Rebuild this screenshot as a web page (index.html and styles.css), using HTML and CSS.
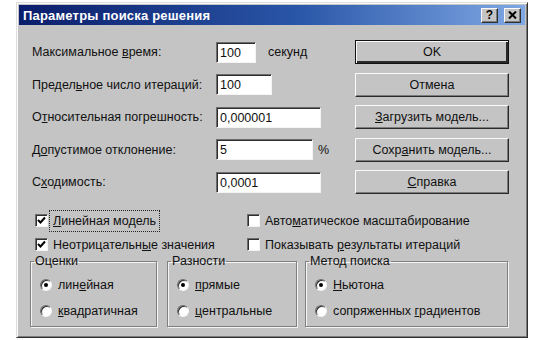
FILE: index.html
```html
<!DOCTYPE html>
<html lang="ru">
<head>
    <meta charset="UTF-8">
    <title>Параметры поиска решения</title>
    <link rel="stylesheet" href="styles.css">
</head>
<body>
    <div class="dialog">
        <div class="titlebar">
            <span class="title">Параметры поиска решения</span>
            <div class="title-btns">
                <span class="tbtn">?</span>
                <span class="tbtn">
                    <svg width="9" height="8" viewBox="0 0 9 8"><path d="M1 0.5 L8 7.5 M8 0.5 L1 7.5" stroke="#000" stroke-width="2"/></svg>
                </span>
            </div>
        </div>

        <div class="content">
            <div class="top">
                <div class="fields">
                    <label>Максимальное <u>в</u>ремя:</label>
                    <div class="cell"><input class="inp w40" value="100"><span class="unit">секунд</span></div>

                    <label>Предел<u>ь</u>ное число итераций:</label>
                    <div class="cell"><input class="inp w56" value="100"></div>

                    <label>О<u>т</u>носительная погрешность:</label>
                    <div class="cell"><input class="inp w105" value="0,000001"></div>

                    <label>Д<u>о</u>пустимое отклонение:</label>
                    <div class="cell"><input class="inp w97" value="5"><span class="pct">%</span></div>

                    <label>С<u>х</u>одимость:</label>
                    <div class="cell"><input class="inp w105" value="0,0001"></div>
                </div>

                <div class="buttons">
                    <button class="btn default">OK</button>
                    <button class="btn">Отмена</button>
                    <button class="btn"><u>З</u>агрузить модель...</button>
                    <button class="btn">Сохр<u>а</u>нить модель...</button>
                    <button class="btn"><u>С</u>правка</button>
                </div>
            </div>

            <div class="checks">
                <div class="check"><span class="box on"></span><span class="focus"><u>Л</u>инейная модель</span></div>
                <div class="check"><span class="box"></span><span>Авто<u>м</u>атическое масштабирование</span></div>
                <div class="check"><span class="box on"></span><span>Неотрицательн<u>ы</u>е значения</span></div>
                <div class="check"><span class="box"></span><span>Показывать <u>р</u>езультаты итераций</span></div>
            </div>

            <div class="groups">
                <fieldset class="group g1">
                    <legend>Оценки</legend>
                    <div class="radio"><span class="dot on"></span><span>лин<u>е</u>йная</span></div>
                    <div class="radio"><span class="dot"></span><span><u>к</u>вадратичная</span></div>
                </fieldset>
                <fieldset class="group g2">
                    <legend>Разности</legend>
                    <div class="radio"><span class="dot on"></span><span><u>п</u>рямые</span></div>
                    <div class="radio"><span class="dot"></span><span><u>ц</u>ентральные</span></div>
                </fieldset>
                <fieldset class="group g3">
                    <legend>Метод поиска</legend>
                    <div class="radio"><span class="dot on"></span><span><u>Н</u>ьютона</span></div>
                    <div class="radio"><span class="dot"></span><span>сопряженных <u>г</u>радиентов</span></div>
                </fieldset>
            </div>
        </div>
    </div>
</body>
</html>
```

FILE: styles.css
```css
body {
    margin: 0;
    background: #fff;
    font-family: "Liberation Sans", Arial, sans-serif;
    font-size: 12.5px;
    color: #111;
}
.dialog {
    margin: 2px 0 0 16px;
    width: 512px;
    height: 336px;
    box-sizing: border-box;
    background: #c4c4c4;
    border: 1px solid;
    border-color: #dedede #303030 #303030 #dedede;
    box-shadow: inset 1px 1px #fafafa, inset -1px -1px #7c7c7c;
    padding: 2px;
    display: flex;
    flex-direction: column;
}
.titlebar {
    height: 20px;
    background: linear-gradient(to right, #0a1d6a 0%, #2a56a8 55%, #7fa8e4 100%);
    display: flex;
    align-items: center;
    justify-content: space-between;
    padding: 0 4px 0 4px;
}
.title {
    color: #fff;
    font-weight: bold;
    font-size: 13px;
    letter-spacing: 0.2px;
}
.title-btns {
    display: flex;
    gap: 6px;
}
.tbtn {
    width: 15px;
    height: 13px;
    background: #c4c4c4;
    border: 1px solid;
    border-color: #fafafa #303030 #303030 #fafafa;
    box-shadow: inset -1px -1px #7c7c7c;
    display: flex;
    align-items: center;
    justify-content: center;
    font-weight: bold;
    font-size: 12px;
    line-height: 1;
    color: #000;
}
.content {
    padding: 11px 16px 0 13px;
}
.top {
    display: flex;
    justify-content: space-between;
}
.fields {
    display: grid;
    grid-template-columns: 184px auto;
    grid-auto-rows: 32.5px;
    align-items: center;
}
.cell {
    display: flex;
    align-items: center;
}
.inp {
    height: 21px;
    box-sizing: border-box;
    border: 1px solid;
    border-color: #6c6c6c #f4f4f4 #f4f4f4 #6c6c6c;
    box-shadow: inset 1px 1px #2e2e2e;
    background: #fff;
    font: inherit;
    color: #111;
    padding: 1px 0 0 3px;
    outline: none;
}
.w40 { width: 40px; }
.w56 { width: 56px; }
.w97 { width: 97px; }
.w105 { width: 105px; }
.unit {
    margin-left: 12px;
}
.pct {
    margin-left: 5px;
}
.buttons {
    display: grid;
    grid-auto-rows: 32.5px;
    align-items: center;
}
.btn {
    width: 154px;
    height: 24px;
    box-sizing: border-box;
    background: #c4c4c4;
    border: 1px solid;
    border-color: #fafafa #2a2a2a #2a2a2a #fafafa;
    box-shadow: inset -1px -1px #7c7c7c;
    font: inherit;
    color: #111;
    padding: 0;
}
.btn.default {
    border: 1px solid #111;
    box-shadow: inset 1px 1px #fafafa, inset -2px -2px #2a2a2a, inset -1px -1px #7c7c7c;
}
.checks {
    margin-top: 10px;
    display: grid;
    grid-template-columns: 212px auto;
    grid-auto-rows: 24px;
    align-items: center;
    padding-left: 3px;
}
.check {
    display: flex;
    align-items: center;
    gap: 5px;
}
.box {
    width: 13px;
    height: 13px;
    box-sizing: border-box;
    background: #fff;
    border: 1px solid;
    border-color: #6c6c6c #f4f4f4 #f4f4f4 #6c6c6c;
    box-shadow: inset 1px 1px #2e2e2e;
    flex: none;
}
.box.on {
    background: #fff url("data:image/svg+xml,%3Csvg xmlns='http://www.w3.org/2000/svg' width='11' height='11'%3E%3Cpath d='M2 5 L4.5 7.5 L9 2.5' fill='none' stroke='%23000' stroke-width='2'/%3E%3C/svg%3E") no-repeat 0 0;
}
.focus {
    outline: 1px dotted #222;
    outline-offset: 3px;
}
.groups {
    margin: -2px 0 0 -2px;
    display: flex;
}
.group {
    margin: 0;
    height: 72px;
    box-sizing: border-box;
    border: 1px solid #808080;
    box-shadow: 1px 1px #f4f4f4, inset 1px 1px #f4f4f4;
    padding: 4px 0 0 9px;
    min-width: 0;
}
.group legend {
    padding: 0 1px;
    margin-left: -6px;
    line-height: 13px;
}
.g1 { width: 127px; }
.g2 { width: 130px; margin-left: 10px; }
.g3 { width: 203px; margin-left: 8px; }
.radio {
    display: flex;
    align-items: center;
    gap: 6px;
    height: 26px;
}
.dot {
    width: 12px;
    height: 12px;
    box-sizing: border-box;
    border-radius: 50%;
    background: #fff;
    border: 1px solid;
    border-color: #6c6c6c #f4f4f4 #f4f4f4 #6c6c6c;
    box-shadow: inset 1px 1px #2e2e2e;
    position: relative;
    flex: none;
}
.dot.on::after {
    content: "";
    position: absolute;
    left: 3px;
    top: 3px;
    width: 4px;
    height: 4px;
    border-radius: 50%;
    background: #000;
}
```
